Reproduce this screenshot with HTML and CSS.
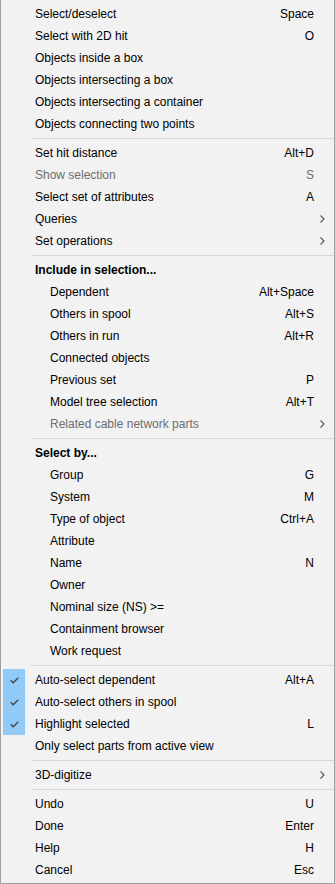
FILE: index.html
```html
<!DOCTYPE html>
<html lang="en">
<head>
    <meta charset="UTF-8" />
    <meta name="viewport" content="width=device-width, initial-scale=1.0">
    <title>Selection menu</title>
    <link rel="stylesheet" href="styles.css">
</head>
<body>

<div class="menu">
    <div class="item"><span class="check"></span><span class="label">Select/deselect</span><span class="key">Space</span><span class="sub"></span></div>
    <div class="item"><span class="check"></span><span class="label">Select with 2D hit</span><span class="key">O</span><span class="sub"></span></div>
    <div class="item"><span class="check"></span><span class="label">Objects inside a box</span><span class="key"></span><span class="sub"></span></div>
    <div class="item"><span class="check"></span><span class="label">Objects intersecting a box</span><span class="key"></span><span class="sub"></span></div>
    <div class="item"><span class="check"></span><span class="label">Objects intersecting a container</span><span class="key"></span><span class="sub"></span></div>
    <div class="item"><span class="check"></span><span class="label">Objects connecting two points</span><span class="key"></span><span class="sub"></span></div>
    <div class="sep"></div>

    <div class="item"><span class="check"></span><span class="label">Set hit distance</span><span class="key">Alt+D</span><span class="sub"></span></div>
    <div class="item disabled"><span class="check"></span><span class="label">Show selection</span><span class="key">S</span><span class="sub"></span></div>
    <div class="item"><span class="check"></span><span class="label">Select set of attributes</span><span class="key">A</span><span class="sub"></span></div>
    <div class="item"><span class="check"></span><span class="label">Queries</span><span class="key"></span><span class="sub"><svg width="5" height="8" viewBox="0 0 5 8"><path d="M0.5 0.5 L4 4 L0.5 7.5" fill="none" stroke="#555" stroke-width="1.1"/></svg></span></div>
    <div class="item"><span class="check"></span><span class="label">Set operations</span><span class="key"></span><span class="sub"><svg width="5" height="8" viewBox="0 0 5 8"><path d="M0.5 0.5 L4 4 L0.5 7.5" fill="none" stroke="#555" stroke-width="1.1"/></svg></span></div>
    <div class="sep"></div>

    <div class="item heading"><span class="check"></span><span class="label">Include in selection...</span><span class="key"></span><span class="sub"></span></div>
    <div class="item indent"><span class="check"></span><span class="label">Dependent</span><span class="key">Alt+Space</span><span class="sub"></span></div>
    <div class="item indent"><span class="check"></span><span class="label">Others in spool</span><span class="key">Alt+S</span><span class="sub"></span></div>
    <div class="item indent"><span class="check"></span><span class="label">Others in run</span><span class="key">Alt+R</span><span class="sub"></span></div>
    <div class="item indent"><span class="check"></span><span class="label">Connected objects</span><span class="key"></span><span class="sub"></span></div>
    <div class="item indent"><span class="check"></span><span class="label">Previous set</span><span class="key">P</span><span class="sub"></span></div>
    <div class="item indent"><span class="check"></span><span class="label">Model tree selection</span><span class="key">Alt+T</span><span class="sub"></span></div>
    <div class="item indent disabled"><span class="check"></span><span class="label">Related cable network parts</span><span class="key"></span><span class="sub"><svg width="5" height="8" viewBox="0 0 5 8"><path d="M0.5 0.5 L4 4 L0.5 7.5" fill="none" stroke="#555" stroke-width="1.1"/></svg></span></div>
    <div class="sep"></div>

    <div class="item heading"><span class="check"></span><span class="label">Select by...</span><span class="key"></span><span class="sub"></span></div>
    <div class="item indent"><span class="check"></span><span class="label">Group</span><span class="key">G</span><span class="sub"></span></div>
    <div class="item indent"><span class="check"></span><span class="label">System</span><span class="key">M</span><span class="sub"></span></div>
    <div class="item indent"><span class="check"></span><span class="label">Type of object</span><span class="key">Ctrl+A</span><span class="sub"></span></div>
    <div class="item indent"><span class="check"></span><span class="label">Attribute</span><span class="key"></span><span class="sub"></span></div>
    <div class="item indent"><span class="check"></span><span class="label">Name</span><span class="key">N</span><span class="sub"></span></div>
    <div class="item indent"><span class="check"></span><span class="label">Owner</span><span class="key"></span><span class="sub"></span></div>
    <div class="item indent"><span class="check"></span><span class="label">Nominal size (NS) &gt;=</span><span class="key"></span><span class="sub"></span></div>
    <div class="item indent"><span class="check"></span><span class="label">Containment browser</span><span class="key"></span><span class="sub"></span></div>
    <div class="item indent"><span class="check"></span><span class="label">Work request</span><span class="key"></span><span class="sub"></span></div>
    <div class="sep"></div>

    <div class="item checked"><span class="check"><svg width="9" height="7" viewBox="0 0 9 7"><path d="M0.7 3.3 L3.2 5.8 L8.3 0.7" fill="none" stroke="#444" stroke-width="1.3"/></svg></span><span class="label">Auto-select dependent</span><span class="key">Alt+A</span><span class="sub"></span></div>
    <div class="item checked"><span class="check"><svg width="9" height="7" viewBox="0 0 9 7"><path d="M0.7 3.3 L3.2 5.8 L8.3 0.7" fill="none" stroke="#444" stroke-width="1.3"/></svg></span><span class="label">Auto-select others in spool</span><span class="key"></span><span class="sub"></span></div>
    <div class="item checked"><span class="check"><svg width="9" height="7" viewBox="0 0 9 7"><path d="M0.7 3.3 L3.2 5.8 L8.3 0.7" fill="none" stroke="#444" stroke-width="1.3"/></svg></span><span class="label">Highlight selected</span><span class="key">L</span><span class="sub"></span></div>
    <div class="item"><span class="check"></span><span class="label">Only select parts from active view</span><span class="key"></span><span class="sub"></span></div>
    <div class="sep"></div>

    <div class="item"><span class="check"></span><span class="label">3D-digitize</span><span class="key"></span><span class="sub"><svg width="5" height="8" viewBox="0 0 5 8"><path d="M0.5 0.5 L4 4 L0.5 7.5" fill="none" stroke="#555" stroke-width="1.1"/></svg></span></div>
    <div class="sep"></div>

    <div class="item"><span class="check"></span><span class="label">Undo</span><span class="key">U</span><span class="sub"></span></div>
    <div class="item"><span class="check"></span><span class="label">Done</span><span class="key">Enter</span><span class="sub"></span></div>
    <div class="item"><span class="check"></span><span class="label">Help</span><span class="key">H</span><span class="sub"></span></div>
    <div class="item"><span class="check"></span><span class="label">Cancel</span><span class="key">Esc</span><span class="sub"></span></div>
</div>

</body>
</html>
```

FILE: styles.css
```css
body {
    margin: 0;
    font-family: "Liberation Sans", Arial, sans-serif;
    font-size: 12px;
    color: #000;
    background-color: #f2f2f2;
}

.menu {
    width: 335px;
    height: 884px;
    box-sizing: border-box;
    background-color: #f2f2f2;
    border: 1px solid #a0a0a0;
    border-top: none;
    padding: 3px 0 2px 2px;
}

.item {
    display: grid;
    grid-template-columns: 22px 1fr auto 20px;
    align-items: center;
    height: 22px;
}

.check {
    height: 22px;
    display: flex;
    align-items: center;
    justify-content: center;
}

.checked .check {
    background-color: #91c9f7;
}

.label {
    padding-left: 10px;
    white-space: nowrap;
}

.indent .label {
    padding-left: 25px;
}

.heading .label {
    font-weight: bold;
}

.key {
    text-align: right;
    white-space: nowrap;
}

.sub {
    display: flex;
    align-items: center;
    padding-left: 6px;
}

.disabled {
    color: #6d6d6d;
}

.sep {
    height: 1px;
    margin: 3px 0 3px 28px;
    background-color: #d7d7d7;
}
```
